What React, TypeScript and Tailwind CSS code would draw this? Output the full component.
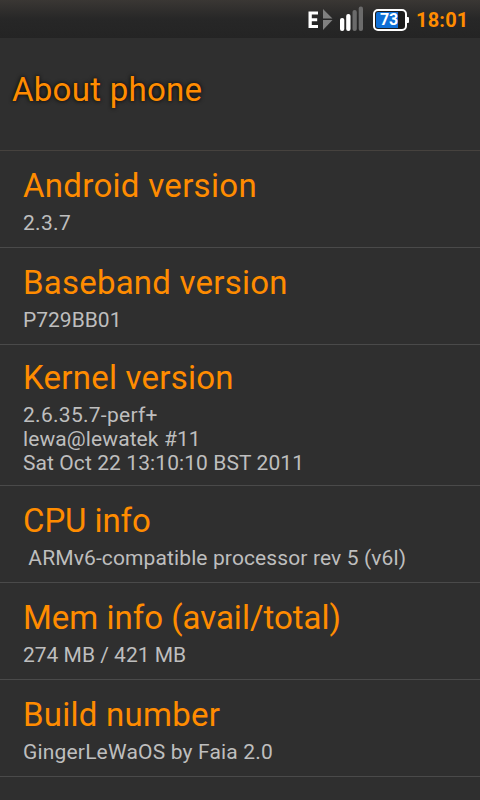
const rows = [
  {
    title: "Android version",
    tracking: "tracking-[0.3px]",
    lines: [{ text: "2.3.7", tracking: "tracking-[0.3px]" }],
  },
  {
    title: "Baseband version",
    tracking: "tracking-[0.22px]",
    lines: [{ text: "P729BB01", tracking: "tracking-normal" }],
  },
  {
    title: "Kernel version",
    tracking: "tracking-[0.24px]",
    lines: [
      { text: "2.6.35.7-perf+", tracking: "tracking-[0.28px]" },
      { text: "lewa@lewatek #11", tracking: "tracking-[0.1px]" },
      { text: "Sat Oct 22 13:10:10 BST 2011", tracking: "tracking-[0.09px]" },
    ],
  },
  {
    title: "CPU info",
    tracking: "tracking-[-0.1px]",
    lines: [{ text: " ARMv6-compatible processor rev 5 (v6l)", tracking: "tracking-[0.12px]" }],
  },
  {
    title: "Mem info (avail/total)",
    tracking: "tracking-normal",
    lines: [{ text: "274 MB / 421 MB", tracking: "tracking-normal" }],
  },
  {
    title: "Build number",
    tracking: "tracking-[0.25px]",
    lines: [{ text: "GingerLeWaOS by Faia 2.0", tracking: "tracking-[0.18px]" }],
  },
];

function DataIcon() {
  return (
    <svg width="26" height="38" viewBox="0 0 26 38">
      <path d="M1.500 11.500h9.500v3H4.800v3.800h5.400v3H4.800V25H11v3H1.500z" fill="#fff" />
      <path d="M16 9l9.500 9.500H16zM16 20h9.500L16 30z" fill="#808080" />
    </svg>
  );
}

function SignalIcon() {
  return (
    <svg width="24" height="38" viewBox="0 0 24 38">
      <rect x="0" y="18" width="4.300" height="13" rx="2" fill="#fff" />
      <rect x="6.200" y="14" width="4.300" height="17" rx="2" fill="#fff" />
      <rect x="12.500" y="10" width="4.300" height="21" rx="2" fill="#6b6b6b" />
      <rect x="18.700" y="6.500" width="4.300" height="24.500" rx="2" fill="#6b6b6b" />
    </svg>
  );
}

function Battery() {
  return (
    <div className="flex items-center">
      <div className="h-[22px] w-[34px] rounded-[5px] border-2 border-white bg-[#1c1c1c] p-px">
        <div className="flex h-4 w-[22px] items-center justify-center rounded-l-[2px] bg-[#0f6fd6] pl-[4px] text-[16px] leading-none font-bold tracking-[-0.3px] text-white">
          73
        </div>
      </div>
      <div className="h-[6px] w-[2px] rounded-r-[1px] bg-white" />
    </div>
  );
}

function StatusBar() {
  return (
    <div className="flex h-[38px] items-center bg-linear-to-b from-[#3a3734] via-[#272727] to-[#242424] pl-[307px]">
      <DataIcon />
      <div className="ml-[7px]">
        <SignalIcon />
      </div>
      <div className="ml-[9px] pt-px">
        <Battery />
      </div>
      <span className="ml-[7px] pt-px text-[20px] font-bold tracking-[0.2px] text-[#ff8c00]">18:01</span>
    </div>
  );
}

export default function App() {
  return (
    <div className="h-[800px] w-[480px] overflow-hidden bg-[#2f2f2f] font-['Roboto',sans-serif]">
      <StatusBar />
      <h1 className="flex h-[113px] items-center border-b border-[#46423e] px-3 pb-2 text-[33px] tracking-[0.28px] text-[#ff8c00] [text-shadow:0_0_4px_#000]">
        About phone
      </h1>
      {rows.map((row) => (
        <section
          key={row.title}
          className="flex min-h-[97px] flex-col justify-center border-b border-[#4a4a4a] px-[23px] pt-3 pb-[10px]"
        >
          <h2 className={`mb-1 text-[33px] leading-[42px] text-[#ff8c00] ${row.tracking}`}>{row.title}</h2>
          {row.lines.map((line) => (
            <p key={line.text} className={`text-[21px] leading-6 whitespace-pre text-[#bebebe] ${line.tracking}`}>
              {line.text}
            </p>
          ))}
        </section>
      ))}
    </div>
  );
}
